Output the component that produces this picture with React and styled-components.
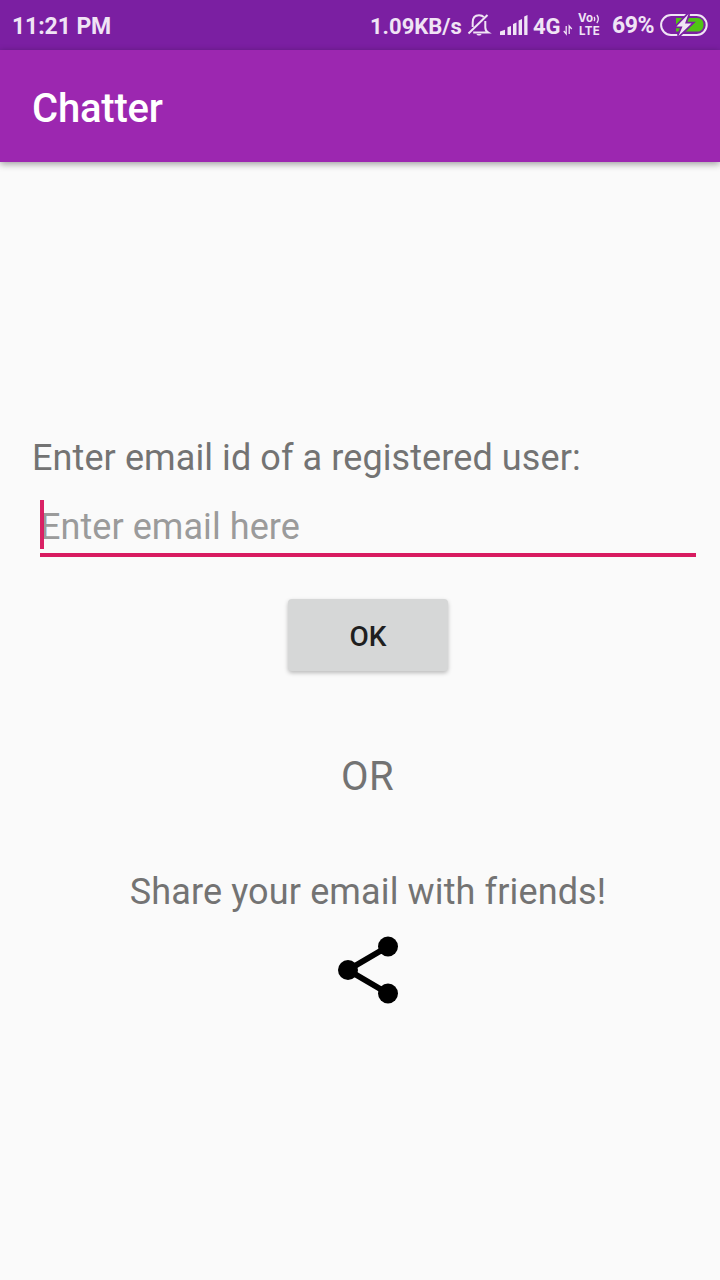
import React from "react";
import styled, { createGlobalStyle } from "styled-components";

const GlobalStyle = createGlobalStyle`
  * { box-sizing: border-box; }
  body { margin: 0; background: #fafafa; font-family: Roboto, "Liberation Sans", sans-serif; }
`;

const Screen = styled.div`
  display: flex;
  flex-direction: column;
  width: 720px;
  height: 1280px;
  overflow: hidden;
  background: #fafafa;
`;

const StatusBar = styled.header`
  display: flex;
  align-items: center;
  height: 50px;
  padding: 0 12px;
  background: #7b1fa2;
  color: #f0e4f5;
  font-size: 23px;
  font-weight: 700;
  line-height: 27px;
  white-space: nowrap;
`;

const Clock = styled.span`
  flex: 1;
  padding-top: 2px;
  letter-spacing: -0.1px;
`;

const StatusText = styled.span`
  flex: none;
  width: ${(p) => p.$width}px;
  margin-right: ${(p) => p.$gap || 0}px;
  padding-top: ${(p) => p.$drop || 0}px;
  font-size: ${(p) => p.$size || 22}px;
  letter-spacing: ${(p) => p.$tracking || 0}px;
`;

const StatusIcon = styled.svg`
  display: block;
  flex: none;
  margin-top: ${(p) => p.$drop || 0}px;
  margin-right: ${(p) => p.$gap || 0}px;
  overflow: visible;
`;

const VolteBadge = styled.span`
  display: flex;
  flex: none;
  flex-direction: column;
  width: 24px;
  margin-right: 10px;
  font-family: Inter, Roboto, sans-serif;
  font-size: 11.5px;
  line-height: 13px;
`;

const VoiceRow = styled.span`
  display: flex;
  align-items: center;
  height: 12px;
`;

const LteRow = styled.span`
  height: 13px;
  padding-left: 1px;
  letter-spacing: 0.3px;
`;

const AppBar = styled.div`
  display: flex;
  align-items: center;
  flex: none;
  height: 112px;
  padding: 4px 32px 0;
  background: #9c27b0;
  box-shadow: 0 2px 7px rgba(0, 0, 0, 0.38);
`;

const Title = styled.h1`
  margin: 0;
  color: #fff;
  font-size: 40px;
  font-weight: 500;
  line-height: 47px;
  letter-spacing: -0.2px;
`;

const Content = styled.main`
  display: flex;
  flex-direction: column;
  align-items: center;
  padding: 275px 16px 0 32px;
  color: #737373;
`;

const Label = styled.label`
  align-self: flex-start;
  font-size: 36px;
  line-height: 42px;
  letter-spacing: 0.09px;
`;

const Field = styled.div`
  display: flex;
  flex-direction: column;
  width: 656px;
  margin-top: 21px;
  padding-bottom: 4px;
  border-bottom: 4px solid #d81b60;
`;

const Hint = styled.div`
  position: relative;
  height: 49px;
  color: #9b9b9b;
  font-size: 36px;
  line-height: 55px;
  letter-spacing: 0.06px;
`;

const Caret = styled.span`
  position: absolute;
  left: 0;
  top: 0;
  width: 4px;
  height: 49px;
  background: #d81b60;
  opacity: 0.97;
`;

const OkButton = styled.button`
  width: 160px;
  height: 72px;
  margin-top: 42px;
  padding: 2px 0 0;
  border: 0;
  border-radius: 4px;
  background: #d6d7d7;
  box-shadow: 0 2px 4px rgba(0, 0, 0, 0.26);
  color: #1f1f1f;
  font: 500 28px/33px Roboto, "Liberation Sans", sans-serif;
`;

const Divider = styled.p`
  margin: 82px 0 0;
  padding-right: 1px;
  font-size: 40px;
  line-height: 47px;
  letter-spacing: 0.3px;
`;

const ShareText = styled.p`
  margin: 71px 0 0;
  font-size: 36px;
  line-height: 42px;
  letter-spacing: 0.13px;
`;

const ShareIcon = styled.svg`
  display: block;
  margin-top: 23px;
`;

export default function App() {
  return (
    <Screen>
      <GlobalStyle />
      <StatusBar>
        <Clock>11:21 PM</Clock>
        <StatusText $width={93} $gap={5} $drop={3}>1.09KB/s</StatusText>
        <StatusIcon width="22" height="24" $gap={10} viewBox="0 0 22 24" fill="none" stroke="#f0e4f5" strokeWidth="2">
          <path d="M4.7 14V9.5C4.7 5 7 2.2 11 2.2C13.2 2.2 14.8 2.9 15.9 4.2M17.3 8V14.5C17.3 17 18.5 18.5 20.3 19.6H5.2" />
          <path d="M.5 20.5L19.5 2" />
          <path d="M8.3 21H13.7L12.3 22.6H9.7Z" fill="#f0e4f5" stroke="none" />
        </StatusIcon>
        <StatusIcon width="28" height="20" $gap={5} viewBox="0 0 28 20" fill="#f0e4f5">
          <path d="M0 16.5L5 14.7V20H0ZM7.5 12.2L11 11V20H7.5ZM13 9L16.5 7.5V20H13ZM18.6 5.5L22 4V20H18.6ZM24.2 1.4L27.5 0V20H24.2Z" />
        </StatusIcon>
        <StatusText $width={30} $drop={3}>4G</StatusText>
        <StatusIcon width="10" height="10" $drop={10} $gap={5} viewBox="0 0 10 10" fill="none" stroke="#f0e4f5" strokeWidth="1.3">
          <path d="M3.2 1V9L.8 6M6.2 9V1L8.8 4" />
        </StatusIcon>
        <VolteBadge>
          <VoiceRow>
            Vo
            <svg width="7" height="10" viewBox="0 0 7 10" fill="none" stroke="#f0e4f5" strokeWidth="1.3">
              <path d="M1 3Q2.5 5 1 7M3.8 1Q6.8 5 3.8 9" />
            </svg>
          </VoiceRow>
          <LteRow>LTE</LteRow>
        </VolteBadge>
        <StatusText $width={42} $gap={6} $size={23} $drop={1} $tracking={-0.4}>69%</StatusText>
        <StatusIcon width="48" height="22" viewBox="0 0 48 22">
          <rect x="1.1" y="1.1" width="45.6" height="19.8" rx="9.9" fill="none" stroke="#f0e4f5" strokeWidth="2" />
          <path d="M16 4H37.5C41.5 4 43.5 7 43.5 10.7S41.5 17.5 37.5 17.5H16Z" fill="#50c414" />
          <path d="M28.5 0L16.5 12.5H22.5L18.5 22L31.5 9.5H25Z" fill="#f0e4f5" stroke="#7b1fa2" strokeWidth="3.5" paintOrder="stroke" />
        </StatusIcon>
      </StatusBar>
      <AppBar>
        <Title>Chatter</Title>
      </AppBar>
      <Content>
        <Label>Enter email id of a registered user:</Label>
        <Field>
          <Hint>
            <Caret />
            Enter email here
          </Hint>
        </Field>
        <OkButton>OK</OkButton>
        <Divider>OR</Divider>
        <ShareText>Share your email with friends!</ShareText>
        <ShareIcon width="60" height="68" viewBox="0 0 60 68">
          <path d="M50 10.5L10 34L50 57.5" fill="none" stroke="#000" strokeWidth="6" />
          <circle cx="50" cy="10.5" r="10" />
          <circle cx="10" cy="34" r="10" />
          <circle cx="50" cy="57.5" r="10" />
        </ShareIcon>
      </Content>
    </Screen>
  );
}
